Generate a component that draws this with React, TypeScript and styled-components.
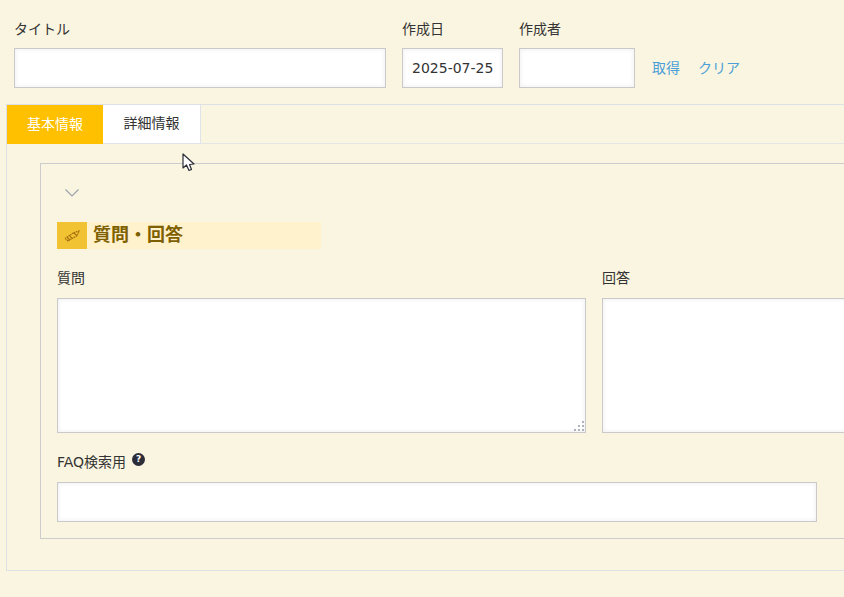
import React from "react";
import styled, { createGlobalStyle } from "styled-components";

const Global = createGlobalStyle`
  html, body { margin: 0; padding: 0; height: 100%; overflow: hidden; background: #faf5e0; }
  * { box-sizing: border-box; }
  body { font-family: "DejaVu Sans", "Noto Sans CJK JP", sans-serif; font-size: 14px; color: #333; }
`;

const Page = styled.div`
  position: relative;
  width: 844px;
  height: 597px;
  overflow: hidden;
  background: #faf5e0;
`;

const Header = styled.div`
  display: flex;
  align-items: flex-end;
  gap: 16px;
  padding: 19px 0 0 14px;
  height: 104px;
`;

const Field = styled.div<{ $w: number }>`
  display: flex;
  flex-direction: column;
  width: ${(p) => p.$w}px;
  flex: none;
  margin-bottom: 16px;
`;

const Label = styled.label`
  display: block;
  height: 29px;
  line-height: 20px;
  font-size: 14px;
  color: #333;
`;

const TextInput = styled.input<{ $w?: number }>`
  display: block;
  width: ${(p) => (p.$w ? `${p.$w}px` : "100%")};
  height: 40px;
  padding: 0 9px;
  border: 1px solid #cacaca;
  border-radius: 0;
  background: #fff;
  box-shadow: inset 0 0 5px rgba(0, 0, 0, 0.08);
  font-family: "DejaVu Sans", "Noto Sans CJK JP", sans-serif;
  font-size: 14px;
  color: #333;
  outline: none;
`;

const Links = styled.div`
  display: flex;
  gap: 18px;
  height: 38px;
  align-items: center;
  margin: 0 0 18px 1px;
`;

const LinkText = styled.a`
  font-size: 14px;
  color: #4a9fd8;
  text-decoration: none;
`;

const Panel = styled.div`
  margin-left: 6px;
  width: 1200px;
  height: 467px;
  border: 1px solid #dde0e4;
`;

const TabBar = styled.div`
  display: flex;
  height: 39px;
  border-bottom: 1px solid #e4e6e6;
`;

const Tab = styled.div<{ $active?: boolean }>`
  display: flex;
  align-items: center;
  justify-content: center;
  height: 39px;
  width: ${(p) => (p.$active ? 96 : 98)}px;
  padding-bottom: 4px;
  font-size: 14px;
  color: ${(p) => (p.$active ? "#fff" : "#333")};
  background: ${(p) => (p.$active ? "#ffc000" : "#fff")};
  border-right: ${(p) => (p.$active ? "none" : "1px solid #e0e4ea")};
  border-bottom: ${(p) => (p.$active ? "none" : "1px solid #e0e4ea")};
`;

const TabBody = styled.div`
  padding: 19px 0 0 33px;
`;

const Fieldset = styled.div`
  width: 1150px;
  height: 376px;
  border: 1px solid #cccccc;
  padding: 16px 0 0 16px;
`;

const Toggle = styled.div`
  height: 42px;
  padding: 8px 0 0 7px;
  line-height: 0;
`;

const SectionTitle = styled.div`
  display: flex;
  align-items: center;
  width: 264px;
  height: 27px;
  background: #fff2cc;
  color: #7f6000;
  font-size: 18px;
  font-weight: 700;
  line-height: 21px;
`;

const IconBox = styled.span`
  display: flex;
  align-items: center;
  justify-content: center;
  width: 30px;
  height: 27px;
  margin-right: 6px;
  background: #f1c232;
`;

const TitleText = styled.span`
  display: block;
  height: 27px;
  padding-top: 2px;
`;

const Columns = styled.div`
  display: flex;
  gap: 16px;
  margin-top: 20px;
`;

const Column = styled.div`
  position: relative;
  width: 529px;
  flex: none;
`;

const AreaLabel = styled.label`
  display: block;
  height: 29px;
  line-height: 19px;
  font-size: 14px;
  color: #333;
`;

const TextArea = styled.textarea`
  display: block;
  width: 529px;
  height: 135px;
  border: 1px solid #cacaca;
  border-radius: 0;
  background: #fff;
  box-shadow: inset 0 0 5px rgba(0, 0, 0, 0.08);
  resize: none;
  outline: none;
`;

const Grip = styled.svg`
  position: absolute;
  right: 2px;
  bottom: 2px;
`;

const FaqBlock = styled.div`
  margin-top: 19px;
`;

const FaqLabel = styled.label`
  display: flex;
  align-items: flex-start;
  gap: 6px;
  height: 30px;
  line-height: 20px;
  font-size: 14px;
  color: #333;
`;

const Help = styled.span`
  display: flex;
  align-items: center;
  justify-content: center;
  width: 13px;
  height: 13px;
  margin-top: 1px;
  border-radius: 50%;
  background: #2b2d38;
  color: #fff;
  font-size: 9px;
  font-weight: 700;
  line-height: 1;
`;

const Cursor = styled.svg`
  position: absolute;
  left: 182px;
  top: 153px;
`;

export default function App() {
  return (
    <Page>
      <Global />
      <Header>
        <Field $w={372}>
          <Label>タイトル</Label>
          <TextInput />
        </Field>
        <Field $w={101}>
          <Label>作成日</Label>
          <TextInput defaultValue="2025-07-25" />
        </Field>
        <Field $w={116}>
          <Label>作成者</Label>
          <TextInput />
        </Field>
        <Links>
          <LinkText>取得</LinkText>
          <LinkText>クリア</LinkText>
        </Links>
      </Header>
      <Panel>
        <TabBar>
          <Tab $active>基本情報</Tab>
          <Tab>詳細情報</Tab>
        </TabBar>
        <TabBody>
          <Fieldset>
            <Toggle>
              <svg width="16" height="10" viewBox="0 0 16 10" fill="none">
                <path d="M1.5 1.5 L8 8 L14.5 1.5" stroke="#9aa3ad" strokeWidth="1.2" />
              </svg>
            </Toggle>
            <SectionTitle>
              <IconBox>
                <svg width="16" height="12" viewBox="0 0 16 12" fill="none" stroke="#a06c10" strokeWidth="1.1">
                  <path d="M1 8.5 L9.5 2.8 L15 1 L13 5.6 L4 11 Z" strokeDasharray="1.6 0.5" />
                  <path d="M3 7.2 L5.8 10 M5.5 5.5 L8 8.4 M9.5 2.8 L13 5.6" />
                </svg>
              </IconBox>
              <TitleText>質問・回答</TitleText>
            </SectionTitle>
            <Columns>
              <Column>
                <AreaLabel>質問</AreaLabel>
                <TextArea />
                <Grip width="12" height="12" viewBox="0 0 12 12" fill="#aeb3bb">
                  <rect x="10" y="2" width="2" height="2" />
                  <rect x="6" y="6" width="2" height="2" />
                  <rect x="10" y="6" width="2" height="2" />
                  <rect x="2" y="10" width="2" height="2" />
                  <rect x="6" y="10" width="2" height="2" />
                  <rect x="10" y="10" width="2" height="2" />
                </Grip>
              </Column>
              <Column>
                <AreaLabel>回答</AreaLabel>
                <TextArea />
              </Column>
            </Columns>
            <FaqBlock>
              <FaqLabel>
                FAQ検索用
                <Help>?</Help>
              </FaqLabel>
              <TextInput $w={760} />
            </FaqBlock>
          </Fieldset>
        </TabBody>
      </Panel>
      <Cursor width="14" height="20" viewBox="0 0 14 20">
        <path d="M1 1 L1 15 L4.5 12 L7 17.5 L9.5 16.5 L7.5 11.5 L12 11 Z" fill="#fff" stroke="#2b2d38" strokeWidth="1.2" strokeLinejoin="round" />
      </Cursor>
    </Page>
  );
}
